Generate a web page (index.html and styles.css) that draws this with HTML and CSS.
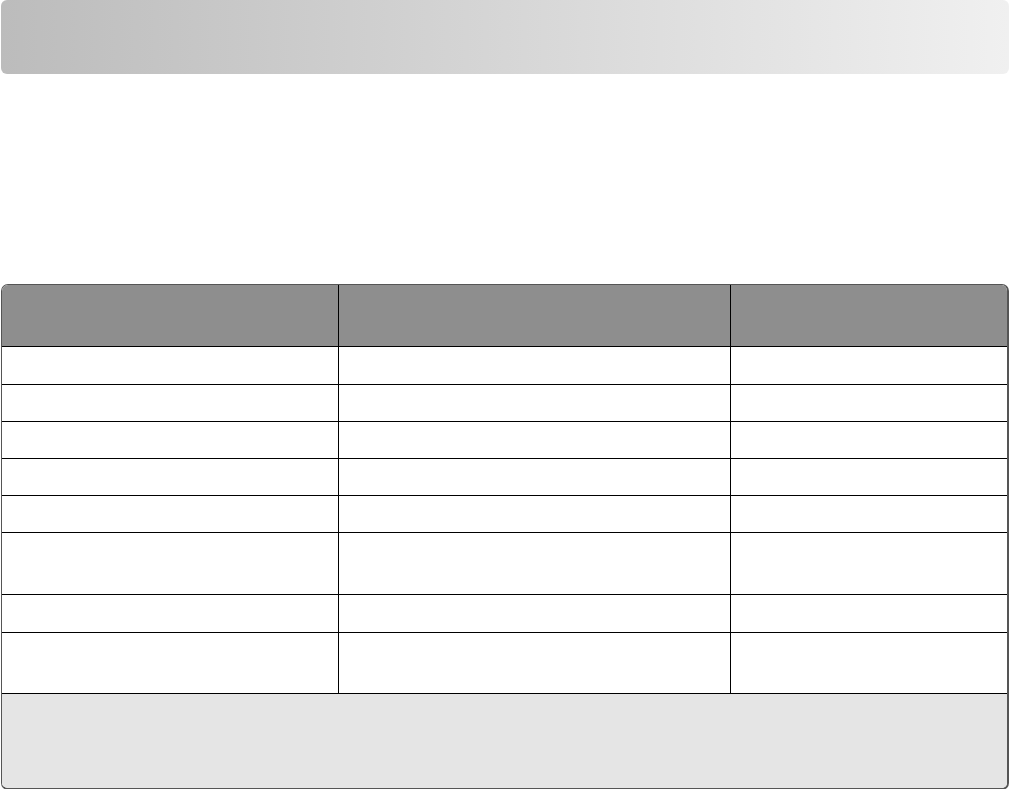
FILE: index.html
```html
<!DOCTYPE html>
<html>
<head>
<meta charset="utf-8">
<link rel="stylesheet" href="styles.css">
</head>
<body>
<div class="banner"></div>
<div class="sheet">
  <div class="row head">
    <div class="cell"></div><div class="cell"></div><div class="cell"></div>
  </div>
  <div class="row first"><div class="cell"></div><div class="cell"></div><div class="cell"></div></div>
  <div class="row"><div class="cell"></div><div class="cell"></div><div class="cell"></div></div>
  <div class="row"><div class="cell"></div><div class="cell"></div><div class="cell"></div></div>
  <div class="row"><div class="cell"></div><div class="cell"></div><div class="cell"></div></div>
  <div class="row"><div class="cell"></div><div class="cell"></div><div class="cell"></div></div>
  <div class="row tall"><div class="cell"></div><div class="cell"></div><div class="cell"></div></div>
  <div class="row first"><div class="cell"></div><div class="cell"></div><div class="cell"></div></div>
  <div class="row tall2"><div class="cell"></div><div class="cell"></div><div class="cell"></div></div>
  <div class="foot"></div>
</div>
</body>
</html>
```
FILE: styles.css
```css
html, body {
  margin: 0;
  padding: 0;
  background: #fff;
  font-family: "Liberation Sans", Arial, sans-serif;
}
body {
  width: 1010px;
}
.banner {
  margin: 0 1px;
  height: 74px;
  border-radius: 6px;
  background: linear-gradient(to right, #bcbcbc, #f0f0f0);
}
.sheet {
  margin: 210px 1px 0 1px;
  width: 1008px;
  box-sizing: border-box;
  border: 1px solid #555;
  border-right-width: 2px;
  border-bottom-width: 2px;
  border-radius: 7px;
  overflow: hidden;
}
.row {
  display: grid;
  grid-template-columns: 337px 392px 1fr;
  box-sizing: border-box;
  height: 37px;
  border-bottom: 1px solid #000;
}
.row.head {
  height: 62px;
  background: #8e8e8e;
}
.row.first {
  height: 38px;
}
.row.tall {
  height: 62px;
}
.row.tall2 {
  height: 61px;
}
.cell {
  border-right: 1px solid #000;
}
.cell:last-child {
  border-right: none;
}
.foot {
  height: 94px;
  background: #e5e5e5;
}
```
